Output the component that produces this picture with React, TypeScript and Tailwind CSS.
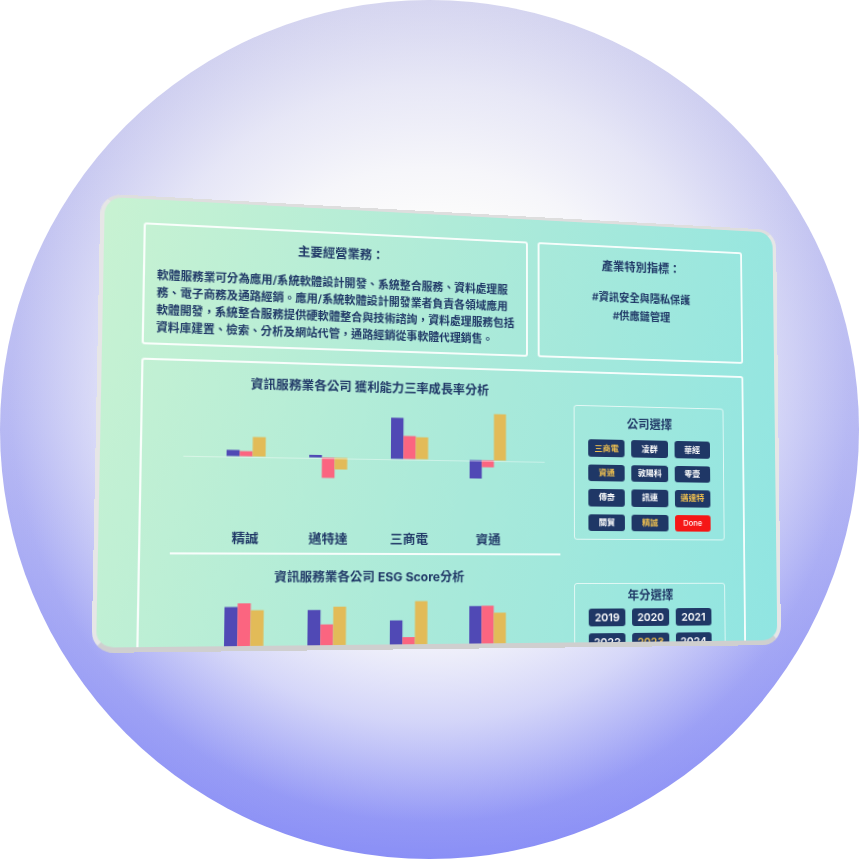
const companies = [
  { name: '三商電', on: true },
  { name: '凌群' },
  { name: '華經' },
  { name: '資通', on: true },
  { name: '敦陽科' },
  { name: '零壹' },
  { name: '傳奇' },
  { name: '訊連' },
  { name: '邁達特', on: true },
  { name: '關貿' },
  { name: '精誠', on: true },
];

const years = [
  { name: '2019' },
  { name: '2020' },
  { name: '2021' },
  { name: '2022' },
  { name: '2023', on: true },
  { name: '2024' },
];

const growth = [
  { name: '精誠', bars: [6, 5, 19] },
  { name: '邁特達', bars: [2.5, -20, -11.5] },
  { name: '三商電', bars: [41, 23, 22] },
  { name: '資通', bars: [-18.5, -7, 47] },
];

// distance of each bar's top from the top of the chart, the window cuts them off below
const esg = [
  [7.5, 4, 10.7],
  [10.8, 24.9, 7.7],
  [21.5, 38, 2.6],
  [7.8, 7.5, 14.5],
];

const intro = [
  '軟體服務業可分為應用/系統軟體設計開發、系統整合服務、資料處理服',
  '務、電子商務及通路經銷。應用/系統軟體設計開發業者負責各領域應用',
  '軟體開發，系統整合服務提供硬軟體整合與技術諮詢，資料處理服務包括',
  '資料庫建置、檢索、分析及網站代管，通路經銷從事軟體代理銷售。',
];

const barColors = ['#5049b5', '#fb6580', '#e2bb58'];
const barWidth = 12.2;

function GrowthBars({ bars }: { bars: number[] }) {
  const zero = 53.5;
  return (
    <svg width="36.6" height="126" className="shrink-0">
      {bars.map((v, i) => (
        <rect
          key={i}
          x={i * barWidth}
          y={v > 0 ? zero - v : zero}
          width={barWidth}
          height={Math.abs(v)}
          fill={barColors[i]}
        />
      ))}
    </svg>
  );
}

function EsgBars({ tops }: { tops: number[] }) {
  return (
    <svg width="36.6" height="60" className="shrink-0">
      {tops.map((t, i) => (
        <rect key={i} x={i * barWidth} y={t} width={barWidth} height={60 - t} fill={barColors[i]} />
      ))}
    </svg>
  );
}

export default function App() {
  return (
    <div className="relative h-[859px] w-[859px] overflow-hidden bg-white font-['Inter','Noto_Sans_CJK_TC',sans-serif]">
      <div className="h-[859px] w-[859px] rounded-full bg-[radial-gradient(circle_455px_at_50%_47%,#fbfbfb_0%,#fbfbfb_42%,#fbfbfbe6_52%,#fbfbfb99_70%,#fbfbfb66_78%,#fbfbfb0d_92%,#fbfbfb00_100%),linear-gradient(180deg,#d0d0ee_0%,#b4b6f3_50%,#8a8ff6_100%)]" />

      {/* tilted app window */}
      <div className="absolute left-0 top-0 h-[440px] w-[680px] origin-top-left overflow-hidden rounded-[20px] border-x-[4px] border-b-[5px] border-t-[3px] border-x-[#e6e6e6] border-b-[#cfcfcf] border-t-[#dedede] bg-[linear-gradient(105deg,#c8f2d2_0%,#a8e9da_55%,#90e5e2_100%)] pl-[36px] pr-[34px] pt-[23px] text-[#1f3766] [transform:matrix3d(1.115287,0.089807,0,0.00015709,-0.024838,1.013034,0,-0.00004791,0,0,1,0,100.5,193.5,0,1)]">
        <div className="flex gap-[10px]">
          <div className="h-[119px] w-[373.5px] shrink-0 rounded-[3px] border-2 border-white/90 pl-[11px] pt-[11.6px]">
            <h2 className="pr-[10px] text-center text-[12px] font-bold leading-[16px]">主要經營業務：</h2>
            <div className="mt-[13px] whitespace-nowrap text-[10.85px] font-semibold leading-[17px]">
              {intro.map((line) => (
                <p key={line}>{line}</p>
              ))}
            </div>
          </div>
          <div className="h-[119px] flex-1 rounded-[3px] border-2 border-white/90 pt-[11.6px] text-center">
            <h2 className="text-[12px] font-bold leading-[16px]">產業特別指標：</h2>
            <p className="mt-[15.5px] text-[10.85px] font-semibold leading-[19px]">
              #資訊安全與隱私保護
              <br />
              #供應鏈管理
            </p>
          </div>
        </div>

        <div className="mt-[12.5px] flex h-[400px] rounded-[3px] border-2 border-white/90">
          <div className="w-[419px] shrink-0 pl-[27px] pr-[14px]">
            <h3 className="mt-[13px] text-center text-[12.1px] font-bold leading-[16px]">資訊服務業各公司 獲利能力三率成長率分析</h3>
            <div className="relative mt-[9.5px] flex h-[126px] pl-[30px] pr-[34px]">
              {growth.map((c) => (
                <div key={c.name} className="flex flex-1 justify-center">
                  <GrowthBars bars={c.bars} />
                </div>
              ))}
              <div className="absolute left-[11px] right-[16px] top-[53.5px] h-px bg-white/40" />
            </div>
            <div className="flex pl-[30px] pr-[34px] text-[12.5px] font-semibold leading-[16px]">
              {growth.map((c) => (
                <span key={c.name} className="flex-1 text-center">{c.name}</span>
              ))}
            </div>
            <div className="mt-[5px] h-[2px] bg-white/90" />
            <h3 className="mt-[14.4px] text-center text-[12px] font-bold leading-[16px]">資訊服務業各公司 ESG Score分析</h3>
            <div className="mt-[12.6px] flex pl-[30px] pr-[34px]">
              {esg.map((tops, i) => (
                <div key={i} className="flex flex-1 justify-center">
                  <EsgBars tops={tops} />
                </div>
              ))}
            </div>
          </div>

          <div className="flex flex-col gap-[44px] pt-[33px]">
            <div className="h-[138px] w-[159px] rounded-[3px] border border-white/70 px-[14px] pt-[10px]">
              <div className="text-center text-[12px] font-bold leading-[16px]">公司選擇</div>
              <div className="mt-[8.6px] grid grid-cols-3 gap-x-[7px] gap-y-[7.9px]">
                {companies.map((c) => (
                  <button key={c.name} className={`h-[17.6px] rounded-[3px] bg-[#1f3766] text-[8.5px] font-semibold ${c.on ? 'text-[#f0c04f]' : 'text-white'}`}>
                    {c.name}
                  </button>
                ))}
                <button className="h-[17.6px] rounded-[3px] bg-[#f51616] text-[8px] font-medium text-white">Done</button>
              </div>
            </div>
            <div className="w-[159px] rounded-[3px] border border-white/70 px-[14px] pt-[4.6px]">
              <div className="text-center text-[12px] font-bold leading-[16px]">年分選擇</div>
              <div className="mt-[5px] grid grid-cols-3 gap-x-[7px] gap-y-[7px]">
                {years.map((c) => (
                  <button key={c.name} className={`h-[18px] rounded-[3px] bg-[#1f3766] text-[11px] font-semibold ${c.on ? 'text-[#f0c04f]' : 'text-white'}`}>
                    {c.name}
                  </button>
                ))}
              </div>
            </div>
          </div>
        </div>
      </div>
    </div>
  );
}
